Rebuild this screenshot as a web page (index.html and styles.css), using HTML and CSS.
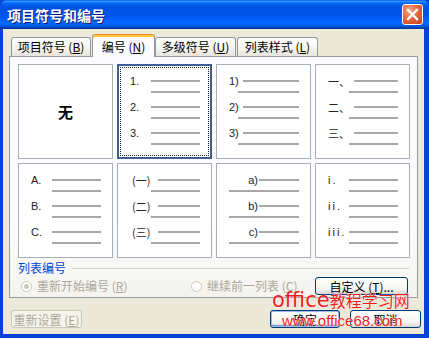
FILE: index.html
```html
<!DOCTYPE html>
<html lang="zh-CN">
<head>
<meta charset="utf-8">
<title>项目符号和编号</title>
<link rel="stylesheet" href="styles.css">
</head>
<body>
<div class="window">
  <div class="titlebar">
    <span class="title">项目符号和编号</span>
    <span class="close">
      <svg viewBox="0 0 21 21" width="21" height="21"><path d="M6 6 L15 15 M15 6 L6 15" stroke="#fff" stroke-width="2.4" stroke-linecap="square"/></svg>
    </span>
  </div>
  <div class="frame">
    <div class="tabs">
      <div class="tab">项目符号 (<u>B</u>)</div>
      <div class="tab active">编号 (<u>N</u>)</div>
      <div class="tab">多级符号 (<u>U</u>)</div>
      <div class="tab">列表样式 (<u>L</u>)</div>
    </div>
    <div class="panel">
      <div class="gallery">
        <div class="cell none">无</div>
        <div class="cell sel c-num">
          <div class="item"><div class="r1"><span class="mk">1.</span><i class="ln"></i></div><i class="ln l2"></i></div>
          <div class="item"><div class="r1"><span class="mk">2.</span><i class="ln"></i></div><i class="ln l2"></i></div>
          <div class="item"><div class="r1"><span class="mk">3.</span><i class="ln"></i></div><i class="ln l2"></i></div>
        </div>
        <div class="cell c-paren">
          <div class="item"><div class="r1"><span class="mk">1)</span><i class="ln"></i></div><i class="ln l2"></i></div>
          <div class="item"><div class="r1"><span class="mk">2)</span><i class="ln"></i></div><i class="ln l2"></i></div>
          <div class="item"><div class="r1"><span class="mk">3)</span><i class="ln"></i></div><i class="ln l2"></i></div>
        </div>
        <div class="cell c-cn">
          <div class="item"><div class="r1"><span class="mk cjk">一、</span><i class="ln"></i></div><i class="ln l2"></i></div>
          <div class="item"><div class="r1"><span class="mk cjk">二、</span><i class="ln"></i></div><i class="ln l2"></i></div>
          <div class="item"><div class="r1"><span class="mk cjk">三、</span><i class="ln"></i></div><i class="ln l2"></i></div>
        </div>
        <div class="cell c-num">
          <div class="item"><div class="r1"><span class="mk">A.</span><i class="ln"></i></div><i class="ln l2"></i></div>
          <div class="item"><div class="r1"><span class="mk">B.</span><i class="ln"></i></div><i class="ln l2"></i></div>
          <div class="item"><div class="r1"><span class="mk">C.</span><i class="ln"></i></div><i class="ln l2"></i></div>
        </div>
        <div class="cell c-cnparen">
          <div class="item"><div class="r1"><span class="mk cjk">(一)</span><i class="ln"></i></div><i class="ln l2"></i></div>
          <div class="item"><div class="r1"><span class="mk cjk">(二)</span><i class="ln"></i></div><i class="ln l2"></i></div>
          <div class="item"><div class="r1"><span class="mk cjk">(三)</span><i class="ln"></i></div><i class="ln l2"></i></div>
        </div>
        <div class="cell c-lower">
          <div class="item"><div class="r1"><span class="mk">a)</span><i class="ln"></i></div><i class="ln l2"></i></div>
          <div class="item"><div class="r1"><span class="mk">b)</span><i class="ln"></i></div><i class="ln l2"></i></div>
          <div class="item"><div class="r1"><span class="mk">c)</span><i class="ln"></i></div><i class="ln l2"></i></div>
        </div>
        <div class="cell c-roman">
          <div class="item"><div class="r1"><span class="mk">i.</span><i class="ln"></i></div><i class="ln l2"></i></div>
          <div class="item"><div class="r1"><span class="mk">ii.</span><i class="ln"></i></div><i class="ln l2"></i></div>
          <div class="item"><div class="r1"><span class="mk">iii.</span><i class="ln"></i></div><i class="ln l2"></i></div>
        </div>
      </div>
      <div class="group">
        <div class="group-title"><span>列表编号</span></div>
        <div class="opts">
          <label class="opt first"><span class="radio on"></span>重新开始编号 (<u>R</u>)</label>
          <label class="opt"><span class="radio"></span>继续前一列表 (<u>C</u>)</label>
          <button class="btn custom">自定义 (<u>T</u>)...</button>
        </div>
      </div>
    </div>
    <div class="footer">
      <button class="btn reset" disabled>重新设置 (<u>E</u>)</button>
      <button class="btn ok default">确定</button>
      <button class="btn cancel">取消</button>
    </div>
  </div>
  <div class="watermark">
    <div class="wm1"><span class="wm-lat">office</span>教程学习网</div>
    <div class="wm2">www.office68.com</div>
  </div>
</div>
</body>
</html>
```

FILE: styles.css
```css
body {
	margin: 0;
	font-family: "Noto Sans CJK SC", "DejaVu Sans", sans-serif;
	font-size: 12px;
	color: #000;
}
.window {
	position: relative;
	width: 429px;
	height: 338px;
	overflow: hidden;
	background: #0842D6;
}
.titlebar {
	height: 29px;
	box-sizing: border-box;
	display: flex;
	align-items: center;
	justify-content: space-between;
	padding: 0 6px 0 7px;
	border-radius: 7px 7px 0 0;
	background: linear-gradient(#0058EE 0%, #3593FF 4%, #288EFF 6%, #127DFF 8%, #036FFC 10%, #0262EE 14%, #0057E5 20%, #0054E3 24%, #0055EB 56%, #005BF5 66%, #026AFE 76%, #0062EF 86%, #0052D6 92%, #0040AB 96%, #003092 100%);
}
.title {
	color: #fff;
	font-weight: bold;
	font-size: 14px;
	line-height: 16px;
	text-shadow: 1px 1px 0 #0A1883;
}
.close {
	display: block;
	width: 21px;
	height: 21px;
	box-sizing: border-box;
	border: 1px solid #fff;
	border-radius: 3px;
	background: radial-gradient(circle at 35% 30%, #F4A98E 0%, #E5673F 45%, #C4401C 100%);
}
.close svg {
	display: block;
	margin: -1px;
}
.frame {
	height: 305px;
	box-sizing: border-box;
	margin: 0 5px 0 3px;
	padding: 5px 6px 6px 6px;
	background: #ECE9D8;
}

/* tabs */
.tabs {
	display: flex;
	align-items: flex-end;
	height: 22px;
	padding-left: 2px;
	position: relative;
	z-index: 1;
}
.tab {
	width: 81px;
	height: 19px;
	box-sizing: border-box;
	margin-right: 1px;
	border: 1px solid #919B9C;
	border-bottom: none;
	border-radius: 3px 3px 0 0;
	background: linear-gradient(#FFFFFF, #F3F3EF 60%, #E6E4DC);
	line-height: 17px;
	text-align: center;
	white-space: nowrap;
}
.tab:first-child {
	width: 80px;
}
.tab.active {
	width: 63px;
	height: 23px;
	margin-right: 0;
	margin-bottom: -1px;
	padding-top: 3px;
	border-top-color: #E68B2C;
	background: #FCFCFE;
	box-shadow: inset 0 2px 0 #FFC83C;
}
.panel {
	height: 242px;
	box-sizing: border-box;
	border: 1px solid #919B9C;
	padding: 7px 8px 2px 8px;
	background: linear-gradient(#FCFCFE 70%, #F4F3EE);
}

/* number styles gallery */
.gallery {
	display: grid;
	grid-template-columns: repeat(4, 95px);
	grid-template-rows: 95px 95px;
	gap: 4px;
}
.cell {
	box-sizing: border-box;
	border: 1px solid #A7AFB9;
	background: #fff;
	padding: 10px 11px 0 12px;
	--mk: 21px;
	--l2: 21px;
}
.cell.sel {
	border: 2px solid #3D5E8E;
	outline: 1px dotted #222;
	outline-offset: -4px;
	padding: 9px 10px 0 11px;
}
.cell.none {
	display: flex;
	align-items: center;
	justify-content: center;
	padding: 0;
	font-size: 15px;
	font-weight: bold;
}
.item {
	height: 26px;
}
.r1 {
	display: flex;
	align-items: center;
	height: 12px;
}
.mk {
	flex: none;
	box-sizing: border-box;
	min-width: var(--mk);
	padding-right: 4px;
	font-family: "Liberation Sans", sans-serif;
	font-size: 11px;
	line-height: 12px;
	color: #222;
	white-space: nowrap;
}
.mk.cjk {
	font-family: "Noto Sans CJK SC", sans-serif;
}
.ln {
	display: block;
	height: 2px;
	background: #A8A8A8;
}
.r1 .ln {
	flex: 1;
}
.ln.l2 {
	margin: 4px 0 0 var(--l2);
}
.c-paren {
	--mk: 14px;
	--l2: 9px;
}
.c-cn {
	--mk: 26px;
}
.c-cnparen {
	--mk: 26px;
	padding-left: 14px;
	--l2: 19px;
}
.c-lower {
	--l2: 0px;
}
.c-lower .mk {
	width: 30px;
	text-align: right;
	padding-right: 1px;
}
.c-roman .mk {
	letter-spacing: 2px;
	padding-right: 3px;
}

/* list numbering group */
.group-title {
	display: flex;
	align-items: center;
	margin-top: 3px;
	line-height: 14px;
	color: #0046D5;
}
.group-title::after {
	content: "";
	flex: 1;
	height: 1px;
	margin: 1px 0 0 6px;
	background: #D0D0BF;
}
.opts {
	display: flex;
	align-items: center;
	height: 18px;
	margin-top: 2px;
	padding-left: 3px;
}
.opt {
	display: flex;
	align-items: center;
	color: #ACA899;
	line-height: 14px;
}
.opt.first {
	width: 170px;
}
.radio {
	display: inline-flex;
	align-items: center;
	justify-content: center;
	width: 11px;
	height: 11px;
	box-sizing: border-box;
	margin-right: 5px;
	border: 1px solid #CAC8BB;
	border-radius: 50%;
	background: #fff;
}
.radio.on::before {
	content: "";
	width: 5px;
	height: 5px;
	border-radius: 50%;
	background: #CAC8BB;
}

/* buttons */
.btn {
	height: 18px;
	box-sizing: border-box;
	padding: 0;
	border: 1px solid #003C74;
	border-radius: 3px;
	background: linear-gradient(#FFFFFF, #F4F4F0 70%, #D8D3C8);
	font-family: "Noto Sans CJK SC", sans-serif;
	font-size: 12px;
	line-height: 15px;
	color: #000;
}
.btn:disabled {
	border-color: #C9C7BA;
	background: #F5F4EA;
	color: #ACA899;
}
.btn.default {
	box-shadow: inset 0 0 0 1px #9DBBEA, inset 0 -1px 0 1px #6F95DA;
}
.btn.custom {
	width: 93px;
	margin-left: auto;
	margin-right: 1px;
}
.footer {
	display: flex;
	margin-top: 12px;
	padding-left: 2px;
}
.btn.reset {
	width: 71px;
}
.btn.ok {
	width: 70px;
	margin-left: auto;
}
.btn.cancel {
	width: 71px;
	margin-left: 10px;
	margin-right: -3px;
}

/* watermark stamped over the dialog */
.watermark {
	position: absolute;
	left: 272px;
	top: 290px;
	color: #F21C1C;
	text-shadow: 0 0 1px #fff, 0 0 1px #fff;
}
.wm1 {
	font-size: 16px;
	line-height: 20px;
	white-space: nowrap;
}
.wm-lat {
	font-family: "DejaVu Sans", sans-serif;
	font-size: 21px;
}
.wm2 {
	margin: 3px 0 0 10px;
	font-family: "Liberation Sans", sans-serif;
	font-size: 15px;
	line-height: 16px;
}
```
